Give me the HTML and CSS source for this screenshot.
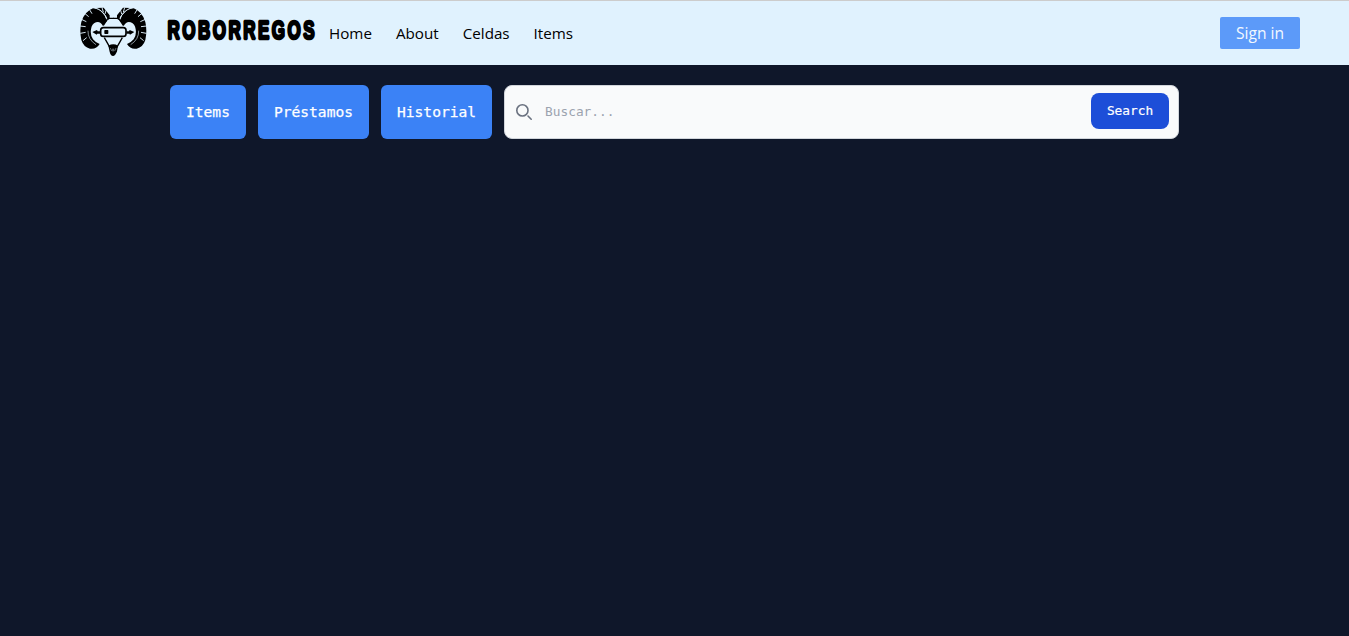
FILE: index.html
```html
<!DOCTYPE html>
<html lang="es">
<head>
<meta charset="utf-8">
<title>Roborregos</title>
<link rel="stylesheet" href="styles.css">
</head>
<body>
<header class="navbar">
  <a class="brand">
    <svg class="brand-ram" viewBox="18 18 201 153" aria-hidden="true">
      <defs>
        <g id="ram-half">
          <path d="M100 62 92 70 87 78Q78 62 66 67Q53 72 51 88Q48 105 57 118Q65 128 77 132Q67 149 48 146Q29 142 22 120Q16 91 22 66Q31 35 57 25Q86 26 100 62Z"/>
          <path d="M65 24 89 23 107 46V56L102 60Q94 36 65 24Z"/>
          <path class="cut" d="M46 28 54 41M32 40 44 50M22 58 37 65M18 78 35 80M19 100 35 97M27 122 38 113M63 23Q91 32 99 60M84 23 88 36M96 31 93 42"/>
          <path class="arc" d="M42 92Q41 118 66 134"/>
          <path d="M55 96 69 90 71 94H79V101H70L68 104Z"/>
          <path class="line" d="M103 55H119M101 56 88 76M91 113 108 143"/>
        </g>
      </defs>
      <use href="#ram-half"/>
      <use href="#ram-half" transform="matrix(-1 0 0 1 236 0)"/>
      <rect class="visor" x="80" y="83" width="76" height="26" rx="8"/>
      <rect x="91" y="90" width="12" height="12" rx="2"/>
      <path d="M103 137Q118 129 132 137L129 154Q124 168 117 168Q110 168 107 155Z"/>
      <path class="snout" d="M109 144 113 153M126 144 122 153M116 146V154M119 146V154"/>
    </svg>
    <svg class="brand-name" viewBox="0 0 150 24" role="img">
      <text x="1.6" y="13.6" transform="scale(1 1.5)" textLength="147" lengthAdjust="spacing">ROBORREGOS</text>
    </svg>
  </a>
  <nav class="links">
    <a>Home</a>
    <a>About</a>
    <a>Celdas</a>
    <a>Items</a>
  </nav>
  <button class="sign-in">Sign in</button>
</header>
<main class="toolbar">
  <button class="tab">Items</button>
  <button class="tab">Préstamos</button>
  <button class="tab">Historial</button>
  <form class="search">
    <svg class="search-icon" viewBox="0 0 20 20" aria-hidden="true"><path d="m19 19-4-4m0-7A7 7 0 1 1 1 8a7 7 0 0 1 14 0Z"/></svg>
    <input class="search-input" type="text" placeholder="Buscar...">
    <button class="search-button" type="button">Search</button>
  </form>
</main>
</body>
</html>
```
FILE: styles.css
```css
* { box-sizing: border-box; }
body {
  margin: 0;
  min-height: 100vh;
  background: #0f172a;
  font-family: "Open Sans", "Noto Sans", sans-serif;
}
button { border: 0; font-family: inherit; }
.navbar {
  display: flex;
  align-items: center;
  height: 65px;
  padding: 0 49px 0 80px;
  border-top: 1px solid #ccc;
  background: #e0f2fe;
}
.brand { display: flex; align-items: flex-start; height: 50px; margin-bottom: 2px; }
.brand-ram { width: 67px; height: 51px; margin-top: -1px; }
.brand-ram .cut { fill: none; stroke: #e0f2fe; stroke-width: 2.8; }
.brand-ram .arc { fill: none; stroke: #e0f2fe; stroke-width: 1.8; }
.brand-ram .line { fill: none; stroke: #000; stroke-width: 4; }
.brand-ram .visor { fill: #e0f2fe; stroke: #000; stroke-width: 5; }
.brand-ram .snout { fill: none; stroke: #b8c7d0; stroke-width: 1.5; }
.brand-name { width: 150px; height: 24px; margin: 12px 0 0 19px; overflow: visible; }
.brand-name text {
  font: bold 17px "Liberation Sans", sans-serif;
  stroke: #000;
  stroke-width: 2.3;
  stroke-linejoin: bevel;
  vector-effect: non-scaling-stroke;
}
.links {
  display: flex;
  gap: 24px;
  margin-left: 13px;
  padding-bottom: 1px;
  color: #000;
  font-size: 15.2px;
  line-height: 24px;
}
.sign-in {
  width: 80px;
  height: 32px;
  margin-left: auto;
  padding: 0;
  border-radius: 2px;
  background: #5c9af9;
  color: #f2f8ff;
  font-size: 15.6px;
}
.toolbar {
  display: flex;
  gap: 12px;
  width: 1009px;
  margin: 20px auto 0;
  font-family: "DejaVu Sans Mono", monospace;
}
.tab {
  height: 54px;
  padding: 0 16px 2px;
  border-radius: 6px;
  background: #3b82f6;
  color: #fff;
  font-size: 14.6px;
  -webkit-text-stroke: 0.25px #fff;
}
.search {
  display: flex;
  flex: 1;
  align-items: center;
  height: 54px;
  padding: 0 9px 0 11px;
  border: 1px solid #d1d5db;
  border-radius: 8px;
  background: #f9fafb;
}
.search-icon { width: 16px; height: 16px; overflow: visible; fill: none; stroke: #6b7280; stroke-width: 2; stroke-linecap: round; }
.search-input {
  flex: 1;
  min-width: 0;
  margin-left: 13px;
  padding: 0 0 2px;
  border: 0;
  outline: 0;
  background: transparent;
  font: 12.8px "DejaVu Sans Mono", monospace;
}
.search-input::placeholder { color: #9ca3af; }
.search-button {
  width: 78px;
  height: 36px;
  margin-bottom: 2px;
  padding: 0 0 2px;
  border-radius: 8px;
  background: #1d4ed8;
  color: #fff;
  font-size: 12.8px;
  -webkit-text-stroke: 0.2px #fff;
}
```
